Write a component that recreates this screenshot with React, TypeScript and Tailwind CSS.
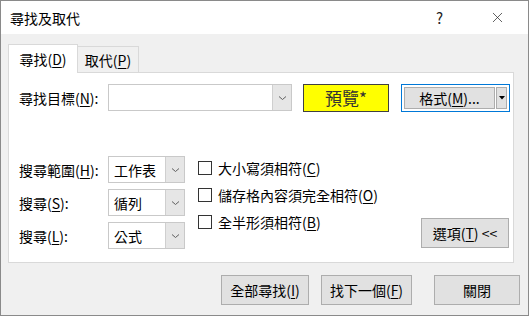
import { X } from 'lucide-react';

const font = { fontFamily: '"Noto Sans CJK TC", "Noto Sans", sans-serif' };

function Key({ k }: { k: string }) {
  return <span className="underline underline-offset-2">{k}</span>;
}

function Chevron() {
  return (
    <svg width="9" height="6" viewBox="0 0 9 6" className="text-[#606060]">
      <path d="M1 1.5 L4.5 4.5 L8 1.5" fill="none" stroke="currentColor" strokeWidth="1" />
    </svg>
  );
}

function Select({ value }: { value: string }) {
  return (
    <div className="flex h-[27px] w-[77px] border border-[#c9c9c9] bg-white">
      <div className="flex-1 flex items-center pl-[5px] text-[14px]">{value}</div>
      <div className="w-[19px] flex items-center justify-center bg-[#e6e6e6] border-l border-[#cfcfcf]">
        <Chevron />
      </div>
    </div>
  );
}

function Check({ children }: { children: React.ReactNode }) {
  return (
    <div className="flex items-center gap-[6px] h-[27px]">
      <div className="w-[14px] h-[14px] border border-[#333] bg-white" />
      <span className="text-[14px]">{children}</span>
    </div>
  );
}

function Btn({ children, className = '' }: { children: React.ReactNode; className?: string }) {
  return (
    <button className={`h-[30px] bg-[#e1e1e1] border border-[#adadad] text-[14px] flex items-center justify-center ${className}`}>
      {children}
    </button>
  );
}

export default function App() {
  return (
    <div style={font} className="w-[529px] h-[316px] bg-[#f0f0f0] border border-[#8a8a8a] text-black leading-none overflow-hidden">
      <div className="h-[33px] bg-white flex items-center pl-[9px]">
        <span className="text-[14px]">尋找及取代</span>
        <span className="ml-auto text-[15px] text-[#222] mr-[46px]">?</span>
        <X size={17} strokeWidth={1} className="mr-[22px] text-[#222]" />
      </div>

      <div className="pl-[7px] pt-[10px]">
        <div className="flex items-end h-[28px]">
          <div className="w-[70px] h-[29px] bg-white border border-b-0 border-[#d9d9d9] flex items-center justify-center text-[14px] relative z-10 -mb-px">
            尋找(<Key k="D" />)
          </div>
          <div className="w-[61px] h-[26px] bg-[#f0f0f0] border border-l-0 border-b-0 border-[#d9d9d9] flex items-center justify-center text-[14px]">
            取代(<Key k="P" />)
          </div>
        </div>

        <div className="w-[506px] h-[191px] bg-white border border-[#d9d9d9] pt-[11px]">
          <div className="flex items-center h-[27px]">
            <div className="w-[99px] pl-[10px] text-[14px]">尋找目標(<Key k="N" />):</div>
            <div className="flex h-[27px] w-[184px] border border-[#c9c9c9] bg-white">
              <div className="flex-1" />
              <div className="w-[19px] flex items-center justify-center bg-[#e6e6e6] border-l border-[#cfcfcf]">
                <Chevron />
              </div>
            </div>
            <div className="ml-[11px] w-[86px] h-[28px] bg-[#ffff00] border border-[#404040] flex items-center justify-center text-[17px] text-[#333]">
              預覽*
            </div>
            <div className="ml-[12px] w-[109px] h-[28px] border border-[#0078d7] flex items-center p-[2px] gap-[1px]">
              <div className="flex-1 h-full bg-[#e1e1e1] border border-[#adadad] flex items-center justify-center text-[14px]">
                格式(<Key k="M" />)...
              </div>
              <div className="w-[11px] h-full bg-[#e1e1e1] border border-[#adadad] flex items-center justify-center">
                <svg width="6" height="4" viewBox="0 0 6 4"><path d="M0 0 H6 L3 3.5 Z" fill="#000" /></svg>
              </div>
            </div>
          </div>

          <div className="flex mt-[45px]">
            <div className="flex flex-col gap-[6px]">
              {[
                ['搜尋範圍(', 'H', '):', '工作表'],
                ['搜尋(', 'S', '):', '循列'],
                ['搜尋(', 'L', '):', '公式'],
              ].map(([a, k, b, v]) => (
                <div key={k} className="flex items-center">
                  <div className="w-[99px] pl-[10px] text-[14px]">
                    {a}<Key k={k} />{b}
                  </div>
                  <Select value={v} />
                </div>
              ))}
            </div>
            <div className="flex flex-col ml-[13px] -mt-[2px]">
              <Check>大小寫須相符(<Key k="C" />)</Check>
              <Check>儲存格內容須完全相符(<Key k="O" />)</Check>
              <Check>全半形須相符(<Key k="B" />)</Check>
            </div>
            <div className="ml-auto mr-[4px] flex items-end">
              <Btn className="w-[88px] mb-[1px]">選項(<Key k="T" />) &lt;&lt;</Btn>
            </div>
          </div>
        </div>

        <div className="flex mt-[12px] pl-[213px]">
          <Btn className="w-[88px]">全部尋找(<Key k="I" />)</Btn>
          <Btn className="w-[91px] ml-[12px]">找下一個(<Key k="F" />)</Btn>
          <Btn className="w-[86px] ml-[22px]">關閉</Btn>
        </div>
      </div>
    </div>
  );
}
